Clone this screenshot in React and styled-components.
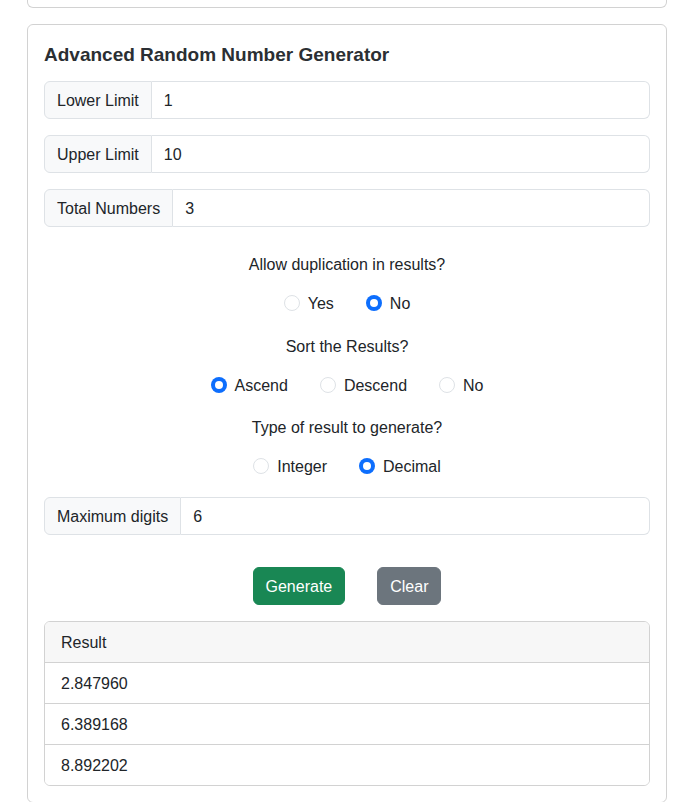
import React, { useState } from "react";
import styled, { createGlobalStyle } from "styled-components";

const Global = createGlobalStyle`
  * { box-sizing: border-box; }
  html, body { margin: 0; padding: 0; background: #fff; }
  body {
    font-family: "Liberation Sans", Arial, sans-serif;
    font-size: 16px;
    line-height: 1.5;
    color: #212529;
  }
`;

const Page = styled.div`
  padding-left: 27px;
  width: 667px;
`;

const CardTail = styled.div`
  height: 8px;
  border: 1px solid rgba(0, 0, 0, 0.175);
  border-top: none;
  border-radius: 0 0 6px 6px;
  margin-bottom: 16px;
`;

const Card = styled.div`
  border: 1px solid rgba(0, 0, 0, 0.175);
  border-radius: 6px;
  padding: 16px;
`;

const Title = styled.h5`
  margin: 0 0 14px;
  padding-top: 2px;
  font-size: 19px;
  font-weight: 700;
  line-height: 24px;
  color: #2b2f33;
`;

const InputGroup = styled.div`
  display: flex;
  height: 38px;
  margin-bottom: ${(p) => p.$mb ?? 16}px;
`;

const Addon = styled.span`
  display: flex;
  align-items: center;
  padding: 7px 12px 5px;
  background: #f8f9fa;
  border: 1px solid #dee2e6;
  border-radius: 6px 0 0 6px;
  white-space: nowrap;
`;

const Input = styled.input`
  flex: 1;
  min-width: 0;
  padding: 7px 12px 5px;
  font: inherit;
  color: #212529;
  border: 1px solid #dee2e6;
  border-left: none;
  border-radius: 0 6px 6px 0;
  outline: none;
  background: #fff;
`;

const Options = styled.div`
  margin-top: 25px;
`;

const Question = styled.p`
  margin: 0 0 14px;
  text-align: center;
  line-height: 24px;
  padding-top: 1px;
`;

const RadioRow = styled.div`
  display: flex;
  justify-content: center;
  gap: 32px;
  height: 24px;
  margin-bottom: 18.5px;
`;

const RadioLabel = styled.label`
  display: flex;
  align-items: center;
  gap: 8px;
  height: 24px;
  cursor: pointer;
`;

const RadioText = styled.span`
  position: relative;
  top: 1px;
`;

const Circle = styled.span`
  width: 16px;
  height: 16px;
  border-radius: 50%;
  flex: none;
  border: ${(p) => (p.$on ? "none" : "1px solid #dee2e6")};
  background: ${(p) => (p.$on ? "#0d6efd" : "#fff")};
  display: flex;
  align-items: center;
  justify-content: center;
  &::after {
    content: "";
    display: ${(p) => (p.$on ? "block" : "none")};
    width: 8px;
    height: 8px;
    border-radius: 50%;
    background: #fff;
  }
`;

const Buttons = styled.div`
  display: flex;
  justify-content: center;
  gap: 32px;
  margin: 32px 0 16px;
`;

const Button = styled.button`
  height: 38px;
  padding: 7px 12px 5px;
  font: inherit;
  color: #fff;
  border: 1px solid ${(p) => p.$bg};
  background: ${(p) => p.$bg};
  border-radius: 6px;
  cursor: pointer;
`;

const List = styled.div`
  border: 1px solid rgba(0, 0, 0, 0.175);
  border-radius: 6px;
  overflow: hidden;
`;

const ListItem = styled.div`
  padding: 9px 16px 7px;
  line-height: 24px;
  background: ${(p) => (p.$head ? "#f7f7f7" : "#fff")};
  & + & {
    border-top: 1px solid rgba(0, 0, 0, 0.175);
  }
`;

function Radio({ on, label, onClick }) {
  return (
    <RadioLabel onClick={onClick}>
      <Circle $on={on} />
      <RadioText>{label}</RadioText>
    </RadioLabel>
  );
}

function RadioQuestion({ q, opts, value, set }) {
  return (
    <>
      <Question>{q}</Question>
      <RadioRow>
        {opts.map((o) => (
          <Radio key={o} label={o} on={value === o} onClick={() => set(o)} />
        ))}
      </RadioRow>
    </>
  );
}

export default function App() {
  const [dup, setDup] = useState("No");
  const [sort, setSort] = useState("Ascend");
  const [type, setType] = useState("Decimal");
  const results = ["2.847960", "6.389168", "8.892202"];
  return (
    <>
      <Global />
      <Page>
        <CardTail />
        <Card>
          <Title>Advanced Random Number Generator</Title>
          <InputGroup>
            <Addon>Lower Limit</Addon>
            <Input defaultValue="1" />
          </InputGroup>
          <InputGroup>
            <Addon>Upper Limit</Addon>
            <Input defaultValue="10" />
          </InputGroup>
          <InputGroup $mb={0}>
            <Addon>Total Numbers</Addon>
            <Input defaultValue="3" />
          </InputGroup>
          <Options>
            <RadioQuestion q="Allow duplication in results?" opts={["Yes", "No"]} value={dup} set={setDup} />
            <RadioQuestion q="Sort the Results?" opts={["Ascend", "Descend", "No"]} value={sort} set={setSort} />
            <RadioQuestion q="Type of result to generate?" opts={["Integer", "Decimal"]} value={type} set={setType} />
          </Options>
          <InputGroup $mb={0}>
            <Addon>Maximum digits</Addon>
            <Input defaultValue="6" />
          </InputGroup>
          <Buttons>
            <Button $bg="#198754">Generate</Button>
            <Button $bg="#6c757d">Clear</Button>
          </Buttons>
          <List>
            <ListItem $head>Result</ListItem>
            {results.map((r) => (
              <ListItem key={r}>{r}</ListItem>
            ))}
          </List>
        </Card>
      </Page>
    </>
  );
}
